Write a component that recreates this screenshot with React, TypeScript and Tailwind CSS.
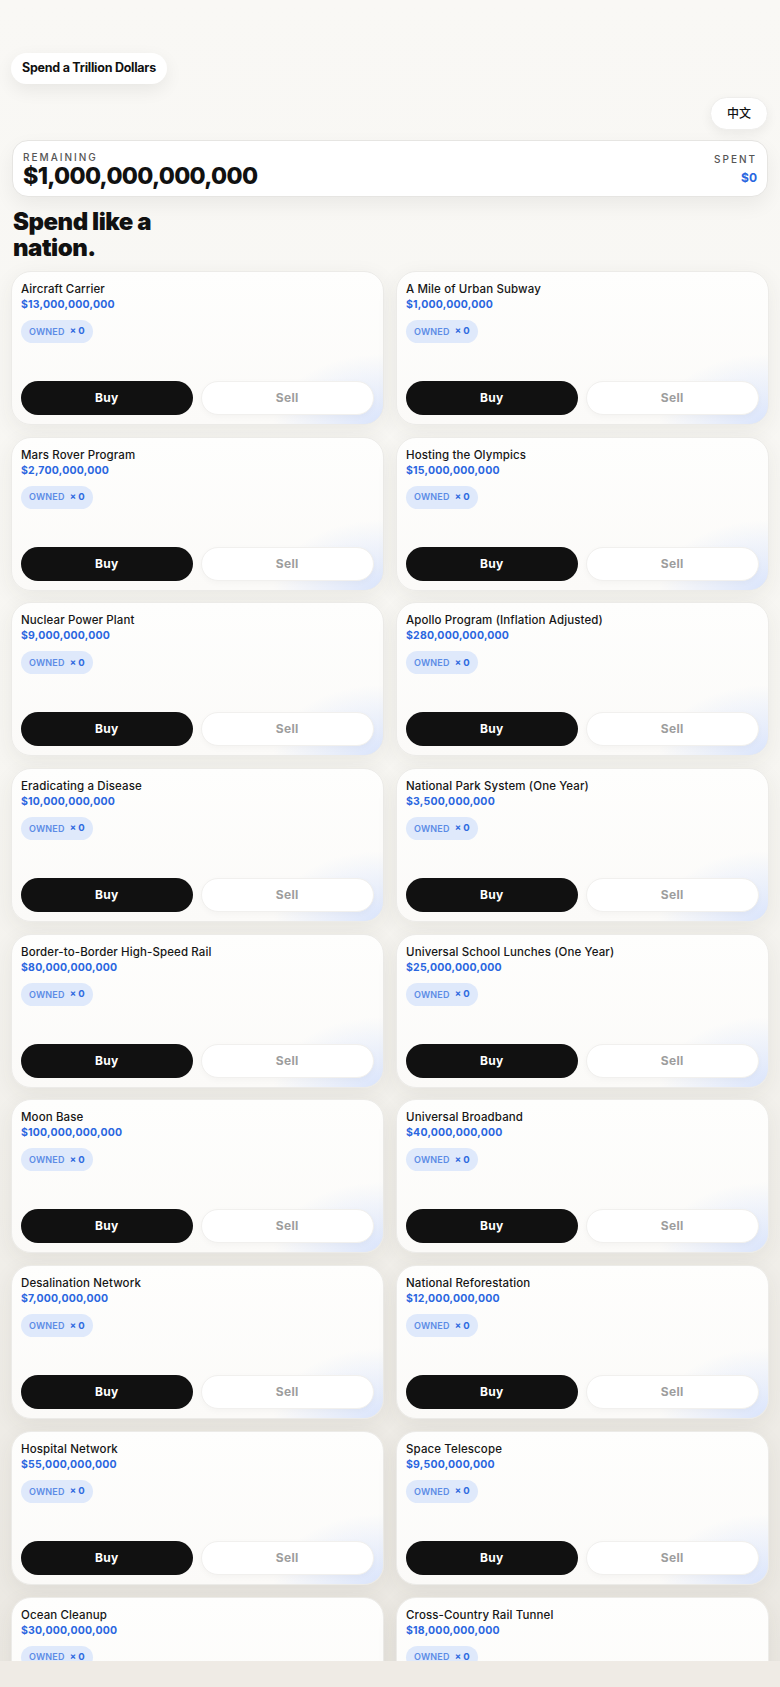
import React from 'react';

type Item = { name: string; price: number };

const ITEMS: Item[] = [
  { name: 'Aircraft Carrier', price: 13_000_000_000 },
  { name: 'A Mile of Urban Subway', price: 1_000_000_000 },
  { name: 'Mars Rover Program', price: 2_700_000_000 },
  { name: 'Hosting the Olympics', price: 15_000_000_000 },
  { name: 'Nuclear Power Plant', price: 9_000_000_000 },
  { name: 'Apollo Program (Inflation Adjusted)', price: 280_000_000_000 },
  { name: 'Eradicating a Disease', price: 10_000_000_000 },
  { name: 'National Park System (One Year)', price: 3_500_000_000 },
  { name: 'Border-to-Border High-Speed Rail', price: 80_000_000_000 },
  { name: 'Universal School Lunches (One Year)', price: 25_000_000_000 },
  { name: 'Moon Base', price: 100_000_000_000 },
  { name: 'Universal Broadband', price: 40_000_000_000 },
  { name: 'Desalination Network', price: 7_000_000_000 },
  { name: 'National Reforestation', price: 12_000_000_000 },
  { name: 'Hospital Network', price: 55_000_000_000 },
  { name: 'Space Telescope', price: 9_500_000_000 },
  { name: 'Ocean Cleanup', price: 30_000_000_000 },
  { name: 'Cross-Country Rail Tunnel', price: 18_000_000_000 },
];

function usd(n: number): string {
  return '$' + n.toLocaleString('en-US');
}

function ItemCard({ item }: { item: Item }) {
  return (
    <div className="flex h-[154px] flex-col rounded-[20px] border border-[#ecebe8] bg-[radial-gradient(110px_70px_at_100%_100%,rgba(190,210,255,0.55),transparent),linear-gradient(#fefefd,#fbfaf8)] p-[9px] shadow-[0_6px_22px_rgba(60,55,45,0.07)]">
      <div className="text-[11.5px] font-medium leading-[16px] tracking-[0.01em] text-[#161616]">{item.name}</div>
      <div className="mt-[1px] text-[10.5px] font-bold leading-[14px] tracking-[0.02em] text-[#2a66e0]">{usd(item.price)}</div>
      <div className="mt-[8px] flex h-[23px] w-fit items-center gap-[5px] rounded-full bg-[#dfe9fb] px-[8px]">
        <span className="text-[9px] font-semibold tracking-[0.02em] text-[#5c8ce6]">OWNED</span>
        <span className="text-[9.5px] font-bold text-[#2f6ae0]">× 0</span>
      </div>
      <div className="flex-1" />
      <div className="flex gap-2">
        <button className="h-[34px] flex-1 rounded-full bg-[#111111] text-[12px] font-bold tracking-[0.03em] text-white">
          Buy
        </button>
        <button className="h-[34px] flex-1 rounded-full border border-[#f1f0ee] bg-white text-[12px] font-bold tracking-[0.03em] text-[#9d9d9d] shadow-[0_2px_6px_rgba(0,0,0,0.03)]">
          Sell
        </button>
      </div>
    </div>
  );
}

export default function App() {
  return (
    <div className="h-[1687px] bg-[#efebe5] font-['Inter','Noto_Sans_CJK_SC',sans-serif]">
      <div className="h-[1661px] overflow-hidden bg-[linear-gradient(180deg,#f9f8f5_0%,#f7f6f2_45%,#ebe8e2_100%)] px-[11px]">
        {/* Header */}
        <div className="pt-[53px]">
          <div className="flex h-[31px] w-fit items-center rounded-full bg-white px-[11px] shadow-[0_6px_18px_rgba(0,0,0,0.07)]">
            <span className="text-[12.5px] font-bold tracking-[-0.02em] text-[#111]">Spend a Trillion Dollars</span>
          </div>
        </div>
        <div className="mt-[13px] flex justify-end pr-[1px]">
          <button className="h-[33px] w-[58px] rounded-full border border-[#efeeec] bg-white text-[12px] font-medium text-[#111] shadow-[0_4px_12px_rgba(0,0,0,0.06)]">
            中文
          </button>
        </div>

        {/* Totals */}
        <div className="mx-[1px] mt-[10px] flex h-[57px] items-start justify-between rounded-[16px] border border-[#e6e5e2] bg-white px-[10px] pt-[10px] shadow-[0_8px_20px_rgba(0,0,0,0.06)]">
          <div>
            <div className="text-[10px] font-medium leading-[12px] tracking-[0.2em] text-[#555]">REMAINING</div>
            <div className="text-[23.3px] font-extrabold leading-[26px] tracking-[-0.03em] text-[#111]">$1,000,000,000,000</div>
          </div>
          <div className="flex flex-col items-end pt-[2px]">
            <div className="text-[10px] font-medium leading-[12px] tracking-[0.2em] text-[#555]">SPENT</div>
            <div className="mt-[6px] text-[12px] font-bold leading-[14px] text-[#2a66e0]">$0</div>
          </div>
        </div>

        <h1 className="mt-[12px] pl-[2px] text-[24px] font-black leading-[26px] tracking-[-0.02em] text-[#111]">
          Spend like a<br />nation.
        </h1>

        {/* Items */}
        <div className="mt-[10px] grid grid-cols-2 gap-x-[12px] gap-y-[11.7px]">
          {ITEMS.map((item) => (
            <ItemCard key={item.name} item={item} />
          ))}
        </div>
      </div>
    </div>
  );
}
